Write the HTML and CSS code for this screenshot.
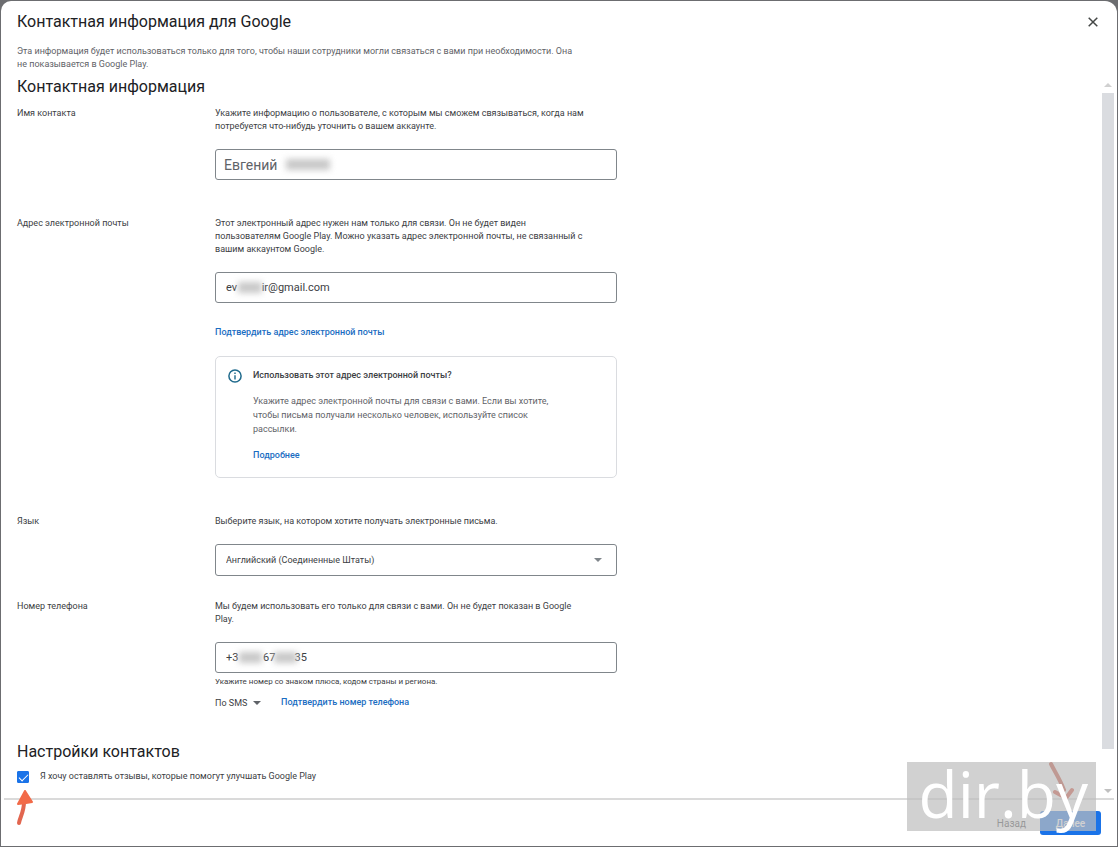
FILE: index.html
```html
<!DOCTYPE html>
<html lang="ru">
  <head>
    <meta charset="UTF-8" />
    <title>Контактная информация для Google</title>
    <link rel="stylesheet" href="styles.css">
  </head>
  <body>
    <div class="modal">
      <header class="modal-header">
        <div>
          <h1>Контактная информация для Google</h1>
          <p class="subtitle">Эта информация будет использоваться только для того, чтобы наши сотрудники могли связаться с вами при необходимости. Она не показывается в Google Play.</p>
        </div>
        <button class="close-btn" aria-label="Закрыть">
          <svg width="10" height="10" viewBox="0 0 10 10"><path d="M0.7 0.7L9.3 9.3M9.3 0.7L0.7 9.3" stroke="#444746" stroke-width="1.5" /></svg>
        </button>
      </header>

      <div class="modal-body">
        <form class="content">
          <h2>Контактная информация</h2>

          <div class="row row-first">
            <label class="row-label" for="name">Имя контакта</label>
            <div class="field">
              <p>Укажите информацию о пользователе, с которым мы сможем связываться, когда нам потребуется что-нибудь уточнить о вашем аккаунте.</p>
              <div class="input-box">
                <input class="input-name" id="name" type="text" value="Евгений">
                <span class="smudge smudge-name"></span>
              </div>
            </div>
          </div>

          <div class="row">
            <label class="row-label" for="email">Адрес электронной почты</label>
            <div class="field">
              <p>Этот электронный адрес нужен нам только для связи. Он не будет виден пользователям Google Play. Можно указать адрес электронной почты, не связанный с вашим аккаунтом Google.</p>
              <div class="input-box">
                <input id="email" type="text" value="ev&nbsp;&nbsp;&nbsp;&nbsp;&nbsp;&nbsp;&nbsp;&nbsp;&nbsp;ir@gmail.com">
                <span class="smudge smudge-email"></span>
              </div>
              <a class="link verify-email" href="#">Подтвердить адрес электронной почты</a>
              <div class="info-card">
                <svg class="info-icon" width="14" height="14" viewBox="0 0 14 14">
                  <circle cx="7" cy="7" r="6.1" fill="none" stroke="#1f6a8c" stroke-width="1.5" />
                  <path d="M7 6.2V10.4M7 3.6V5" stroke="#1f6a8c" stroke-width="1.4" />
                </svg>
                <div>
                  <h3>Использовать этот адрес электронной почты?</h3>
                  <p>Укажите адрес электронной почты для связи с вами. Если вы хотите, чтобы письма получали несколько человек, используйте список рассылки.</p>
                  <a class="link" href="#">Подробнее</a>
                </div>
              </div>
            </div>
          </div>

          <div class="row row-lang">
            <label class="row-label" for="lang">Язык</label>
            <div class="field">
              <p>Выберите язык, на котором хотите получать электронные письма.</p>
              <div class="input-box">
                <select class="lang-select" id="lang">
                  <option>Английский (Соединенные Штаты)</option>
                </select>
                <span class="caret caret-lang"></span>
              </div>
            </div>
          </div>

          <div class="row row-phone">
            <label class="row-label" for="phone">Номер телефона</label>
            <div class="field">
              <p>Мы будем использовать его только для связи с вами. Он не будет показан в Google Play.</p>
              <div class="input-box">
                <input id="phone" type="text" value="+3&nbsp;&nbsp;&nbsp;&nbsp;&nbsp;&nbsp;&nbsp;&nbsp;&nbsp;67&nbsp;&nbsp;&nbsp;&nbsp;&nbsp;&nbsp;&nbsp;35">
                <span class="smudge smudge-phone"></span>
                <span class="smudge smudge-phone second"></span>
              </div>
              <p class="hint">Укажите номер со знаком плюса, кодом страны и региона.</p>
              <div class="verify-phone">
                <div class="sms-box">
                  <select class="sms-select" aria-label="Способ подтверждения">
                    <option>По SMS</option>
                  </select>
                  <span class="caret caret-sms"></span>
                </div>
                <a class="link" href="#">Подтвердить номер телефона</a>
              </div>
            </div>
          </div>

          <h2>Настройки контактов</h2>
          <div class="check-row">
            <input id="feedback" type="checkbox" checked>
            <label for="feedback">Я хочу оставлять отзывы, которые помогут улучшать Google Play</label>
          </div>
        </form>

        <div class="scrollbar">
          <span class="arrow-up"></span>
          <span class="thumb"></span>
          <span class="arrow-down"></span>
        </div>
      </div>

      <footer class="modal-footer">
        <button class="btn-back">Назад</button>
        <button class="btn-next">Далее</button>
      </footer>

      <!-- стрелки-подсказки и водяной знак поверх окна -->
      <svg class="mark mark-check" width="18" height="36" viewBox="0 0 18 36">
        <path d="M4 33C5 27 9 22 9 12" fill="none" stroke="#e2664f" stroke-width="4" stroke-linecap="round" />
        <path d="M10 1L17 12L11 13L3 14Z" fill="#f26a48" stroke="#f26a48" stroke-width="2" stroke-linejoin="round" />
      </svg>
      <svg class="mark mark-next" width="28" height="40" viewBox="0 0 28 40">
        <path d="M5 4C9 12 14 19 18 30" fill="none" stroke="#c2452f" stroke-width="4" stroke-linecap="round" />
        <path d="M9 32L20 38L26 30" fill="none" stroke="#d2452f" stroke-width="4" stroke-linecap="round" stroke-linejoin="round" />
      </svg>
      <div class="watermark">dir.by</div>
    </div>
  </body>
</html>
```

FILE: styles.css
```css
* {
  box-sizing: border-box;
}

body {
  margin: 0;
  background: #6c6d70;
  font-family: Roboto, "Liberation Sans", sans-serif;
  font-size: 9px;
  line-height: 13px;
  color: #3c4043;
}

h1, h2, h3, p {
  margin: 0;
}

h1, h2 {
  font-size: 16px;
  font-weight: 400;
  line-height: 24px;
  color: #202124;
}

input, select, button {
  font-family: inherit;
  color: inherit;
}

/* окно */
.modal {
  position: relative;
  display: flex;
  flex-direction: column;
  min-height: calc(100vh - 2px);
  margin: 1px;
  background: #fff;
  border-radius: 10px 12px 0 0;
}

.modal-header {
  display: flex;
  justify-content: space-between;
  align-items: flex-start;
  padding: 9px 15px 4px 16px;
}
.subtitle {
  max-width: 564px;
  margin-top: 11px;
  color: #5f6368;
}
.close-btn {
  display: flex;
  padding: 4px;
  margin-top: 3px;
  background: none;
  border: none;
  cursor: pointer;
}

.modal-body {
  display: flex;
  flex: 1;
  justify-content: space-between;
}
.content {
  padding: 0 16px;
}

/* строки формы */
.row {
  display: grid;
  grid-template-columns: 198px 402px;
  margin-bottom: 37px;
}
.row-first {
  margin-top: 8px;
}
.row-lang {
  margin-bottom: 24px;
}
.row-phone {
  margin-bottom: 30px;
}
.field {
  display: flex;
  flex-direction: column;
  align-items: flex-start;
}
.field > p {
  max-width: 374px;
}
.input-box {
  position: relative;
  width: 100%;
  margin-top: 16px;
}
.input-box input,
.lang-select {
  display: block;
  width: 100%;
  height: 31px;
  padding: 0 10px;
  background: #fff;
  border: 1px solid #80868b;
  border-radius: 3px;
  font-size: 11px;
}
.input-box .input-name {
  padding: 0 8px;
  font-size: 14px;
  color: #5f6368;
}
.lang-select {
  height: 32px;
  font-size: 9px;
  appearance: none;
}

/* замазанные данные */
.smudge {
  position: absolute;
  top: 10px;
  height: 11px;
  background: #c8c8c8;
  filter: blur(3px);
}
.smudge-name {
  left: 71px;
  width: 44px;
}
.smudge-email {
  left: 23px;
  width: 24px;
}
.smudge-phone {
  left: 24px;
  width: 23px;
}
.smudge-phone.second {
  left: 59px;
}

.caret {
  position: absolute;
  border: 4px solid transparent;
  border-top-color: #5f6368;
  border-bottom: none;
  pointer-events: none;
}
.caret-lang {
  top: 14px;
  right: 15px;
  border-top-color: #80868b;
}
.caret-sms {
  top: 6px;
  right: 0;
}

.link {
  color: #1a6dc2;
  font-weight: 500;
  text-decoration: none;
}
.verify-email {
  margin: 23px 0 17px;
}

.info-card {
  display: flex;
  gap: 11px;
  width: 100%;
  padding: 12px 52px 15px 12px;
  border: 1px solid #dadce0;
  border-radius: 5px;
}
.info-icon {
  flex: none;
}
.info-card h3 {
  font-size: 9px;
  font-weight: 500;
}
.info-card p {
  margin: 12px 0 13px;
  line-height: 14px;
  color: #5f6368;
}

.hint {
  margin-top: 2px;
  font-size: 8px;
}
.verify-phone {
  display: flex;
  align-items: center;
  gap: 20px;
  margin-top: 7px;
}
.sms-box {
  position: relative;
}
.sms-select {
  display: block;
  width: 46px;
  height: 15px;
  padding: 0;
  background: none;
  border: none;
  font-size: 9px;
  appearance: none;
}

.check-row {
  display: flex;
  align-items: center;
  gap: 11px;
  margin: 6px 0 14px;
}
.check-row input {
  display: flex;
  justify-content: center;
  width: 12px;
  height: 12px;
  margin: 0;
  background: #fff;
  border: 1px solid #1a73e8;
  border-radius: 1px;
  appearance: none;
}
.check-row input:checked {
  background: #1a73e8;
}
.check-row input:checked::before {
  content: "";
  width: 4px;
  height: 8px;
  border: solid #fff;
  border-width: 0 1px 1px 0;
  transform: rotate(45deg);
}

/* полоса прокрутки */
.scrollbar {
  display: flex;
  flex-direction: column;
  align-items: center;
  width: 12px;
  margin-right: 3px;
  padding: 8px 0 5px;
}
.thumb {
  flex: 1;
  width: 12px;
  margin: 6px 0 40px;
  background: #dadce0;
}
.arrow-up,
.arrow-down {
  border: 4px solid transparent;
}
.arrow-up {
  border-top: none;
  border-bottom-color: #d0d0d0;
}
.arrow-down {
  border-bottom: none;
  border-top-color: #c0c0c0;
}

.modal-footer {
  display: flex;
  justify-content: flex-end;
  gap: 14px;
  margin: 0 3px;
  padding: 11px 13px 11px;
  border-top: 2px solid #dadada;
}
.modal-footer button {
  height: 24px;
  border: none;
  border-radius: 3px;
  font-size: 10px;
  cursor: pointer;
}
.btn-back {
  padding: 0;
  background: none;
}
.btn-next {
  width: 61px;
  background: #1a73e8;
}
.modal-footer .btn-next {
  color: #fff;
  font-weight: 500;
}

.mark {
  position: absolute;
}
.mark-check {
  left: 14px;
  bottom: 20px;
}
.mark-next {
  right: 43px;
  bottom: 46px;
}
.watermark {
  position: absolute;
  right: 21px;
  bottom: 15px;
  width: 189px;
  height: 69px;
  padding-right: 8px;
  background: rgba(190, 190, 190, 0.7);
  color: #fff;
  font-family: "Open Sans", "Noto Sans", sans-serif;
  font-size: 64px;
  line-height: 64px;
  text-align: right;
}
```
